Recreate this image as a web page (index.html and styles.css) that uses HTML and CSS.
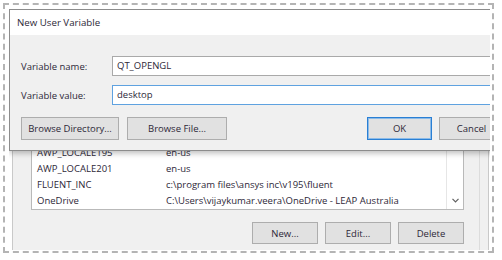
FILE: index.html
```html
<!DOCTYPE html>
<html lang="en">
<head>
    <meta charset="UTF-8">
    <title>New User Variable</title>
    <link rel="stylesheet" href="styles.css">
</head>
<body>
    <div class="frame">
        <div class="shot">
            <!-- environment variables window behind the dialog -->
            <div class="envwin">
                <div class="group">
                    <div class="listbox">
                        <div class="rows">
                            <div class="row"><span class="name">AWP_LOCALE195</span><span class="val">en-us</span></div>
                            <div class="row"><span class="name">AWP_LOCALE201</span><span class="val">en-us</span></div>
                            <div class="row"><span class="name">FLUENT_INC</span><span class="val">c:\program files\ansys inc\v195\fluent</span></div>
                            <div class="row"><span class="name">OneDrive</span><span class="val">C:\Users\vijaykumar.veera\OneDrive - LEAP Australia</span></div>
                        </div>
                        <div class="scroll">
                            <svg width="7" height="5" viewBox="0 0 7 5"><path d="M0.5 0.8 L3.5 3.8 L6.5 0.8" fill="none" stroke="#606060" stroke-width="1.2"/></svg>
                        </div>
                    </div>
                    <div class="actions">
                        <button class="btn">New...</button>
                        <button class="btn">Edit...</button>
                        <button class="btn">Delete</button>
                    </div>
                </div>
            </div>

            <!-- the dialog on top -->
            <div class="dialog">
                <div class="titlebar">New User Variable</div>
                <div class="dbody">
                    <div class="fields">
                        <label>Variable name:</label>
                        <div class="input">QT_OPENGL</div>
                        <label>Variable value:</label>
                        <div class="input focus">desktop</div>
                    </div>
                    <div class="dbuttons">
                        <button class="btn wide1">Browse Directory...</button>
                        <button class="btn wide2">Browse File...</button>
                        <span class="spacer"></span>
                        <button class="btn default">OK</button>
                        <button class="btn">Cancel</button>
                    </div>
                </div>
            </div>
        </div>
    </div>
</body>
</html>
```

FILE: styles.css
```css
body {
    margin: 0;
    background: #fff;
    font-family: "Open Sans", "Noto Sans", sans-serif;
    font-size: 9.5px;
    color: #2d2838;
}
.frame {
    box-sizing: border-box;
    width: 491px;
    height: 250px;
    margin: 3px 0 0 3px;
    padding: 4px 2px 1px 4px;
    border: 2px dashed #b4b4b4;
}
.shot {
    position: relative;
    height: 100%;
    overflow: hidden;
    background: #fff;
}
.envwin {
    box-sizing: border-box;
    height: 100%;
    width: 477px;
    margin-left: 3px;
    background: #f0f0f0;
    border-left: 1px solid #c9c9c9;
    border-right: 1px solid #c9c9c9;
    padding-top: 23px;
}
.group {
    height: 100%;
    width: 466px;
    border-right: 1px solid #dcdcdc;
}
.listbox {
    display: flex;
    margin-left: 18px;
    width: 433px;
    background: #fff;
    border: 1px solid #b9b9b9;
    box-sizing: border-box;
}
.rows {
    flex: 1;
    padding-top: 112px;
}
.row {
    display: flex;
    height: 16px;
    line-height: 16px;
    white-space: nowrap;
}
.name {
    width: 129px;
    padding-left: 5px;
}
.scroll {
    width: 16px;
    border-left: 1px solid #e6e6e6;
    display: flex;
    align-items: flex-end;
    justify-content: center;
    padding-bottom: 6px;
}
.actions {
    display: flex;
    justify-content: flex-end;
    gap: 7px;
    width: 433px;
    margin: 12px 0 0 18px;
}
.actions .btn {
    width: 66px;
    height: 22px;
}
.btn {
    box-sizing: border-box;
    height: 23px;
    padding: 0;
    border: 1px solid #adadad;
    background: #e1e1e1;
    font: inherit;
    color: #2d2838;
    width: 65px;
}
.btn.default {
    border-color: #2a7fd4;
    box-shadow: inset 0 0 0 1px #8cbbe8;
}
.btn.wide1 {
    width: 98px;
}
.btn.wide2 {
    width: 100px;
}
.dialog {
    position: absolute;
    left: 0;
    top: 0;
    width: 530px;
    height: 142px;
    box-sizing: border-box;
    border: 1px solid #8c8c8c;
    background: #f0f0f0;
    box-shadow: 0 2px 6px rgba(0, 0, 0, 0.28);
}
.titlebar {
    height: 25px;
    line-height: 26px;
    padding-left: 7px;
    background: #fff;
    font-size: 9.7px;
}
.dbody {
    padding: 21px 0 0 11px;
}
.fields {
    display: grid;
    grid-template-columns: 91px 1fr;
    row-gap: 9px;
    align-items: center;
}
.input {
    box-sizing: border-box;
    height: 20px;
    line-height: 18px;
    padding-left: 4px;
    background: #fff;
    border: 1px solid #a9a9a9;
}
.input.focus {
    border-color: #5fa2e0;
}
.dbuttons {
    display: flex;
    gap: 7px;
    margin-top: 12px;
}
.dbuttons .wide2 {
    margin-left: 1px;
}
.spacer {
    width: 126px;
}
```
